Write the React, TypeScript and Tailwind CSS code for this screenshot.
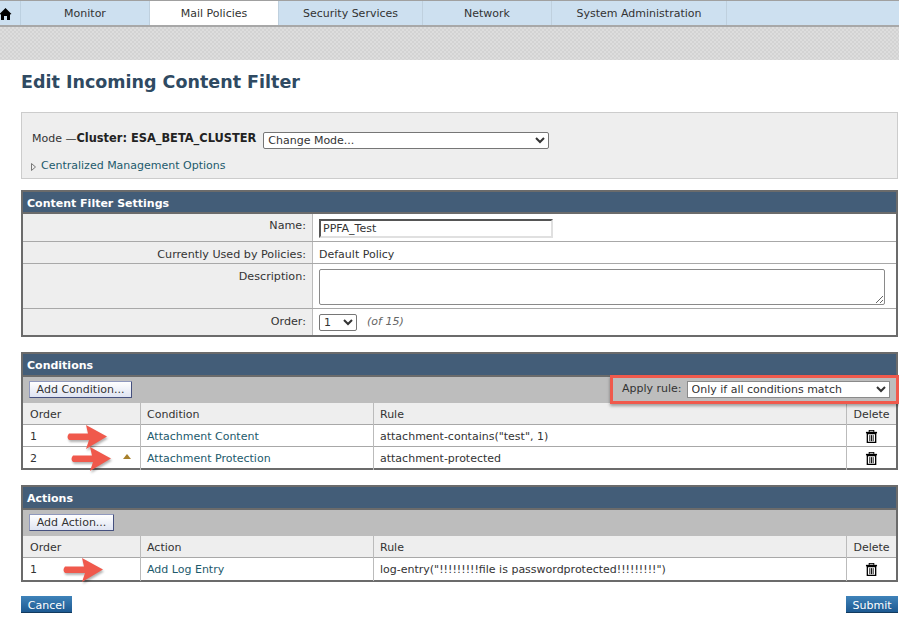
import * as React from "react";

const tabs = [
  { label: "Monitor", width: "w-[129px]" },
  { label: "Mail Policies", width: "w-[129px]", active: true },
  { label: "Security Services", width: "w-[144px]" },
  { label: "Network", width: "w-[129px]" },
  { label: "System Administration", width: "w-[175px]" },
];

function HomeIcon() {
  return (
    <svg viewBox="0 0 12 12" className="w-[12px] h-[12px] shrink-0 mt-[2px]">
      <path d="M5.5 0 L11.5 6 L10 6.5 L10 12 L7 12 L7 8 L4 8 L4 12 L1 12 L1 6.5 L-0.5 6 Z" fill="#000000" />
    </svg>
  );
}

function TrashIcon() {
  return (
    <svg viewBox="0 0 12 14" className="w-[12px] h-[13px] mx-auto -translate-x-[0.5px]">
      <rect x="0" y="2" width="12" height="1.6" fill="#000000" />
      <rect x="3.5" y="0.4" width="5" height="2" fill="none" stroke="#000000" strokeWidth="1" />
      <path d="M1.5 4 L10.5 4 L10.5 13.4 L1.5 13.4 Z" fill="none" stroke="#000000" strokeWidth="1.4" />
      <path d="M4.2 5.5 V12 M6 5.5 V12 M7.8 5.5 V12" stroke="#000000" strokeWidth="1" />
    </svg>
  );
}

function Arrow({ className }: { className: string }) {
  return (
    <svg
      viewBox="0 0 42 26"
      className={`absolute w-[42px] h-[26px] drop-shadow-[1px_2px_1px_rgba(0,0,0,0.3)] ${className}`}
    >
      <path d="M3 9.5 L22 9.5 L20 1 L41 12.5 L20 25 L23 16 L3 16 Q0 13 3 9.5 Z" fill="#f0594c" />
    </svg>
  );
}

function SectionHeader({ title, height }: { title: string; height: string }) {
  return (
    <div className={`${height} bg-[#435d78] border-b-2 border-[#6b6b6b] pl-1 pt-[4px] text-white font-bold text-[11px] leading-[15px]`}>
      {title}
    </div>
  );
}

function GridRow({
  cols,
  head,
  arrow,
  caret,
  last,
  height = "h-[22px]",
}: {
  cols: [string, string, string];
  head?: boolean;
  arrow?: string;
  caret?: boolean;
  last?: boolean;
  height?: string;
}) {
  return (
    <div
      className={`grid grid-cols-[118px_233px_473px_1fr] ${height} ${head ? "bg-[#eeeeee]" : "bg-white"} ${last ? "" : "border-b border-[#a8a8a8]"}`}
    >
      <div className="relative border-r border-[#bbbbbb] pl-[7px] leading-[23px]">
        {cols[0]}
        {arrow && <Arrow className={arrow} />}
        {caret && (
          <span className="absolute left-[100px] top-[7px] w-0 h-0 border-x-[4px] border-x-transparent border-b-[5px] border-b-[#a8812c]" />
        )}
      </div>
      <div className={`border-r border-[#bbbbbb] pl-[6px] leading-[23px] ${head ? "" : "text-[#1c5a6c]"}`}>{cols[1]}</div>
      <div className="border-r border-[#bbbbbb] pl-[6px] leading-[23px] whitespace-nowrap">{cols[2]}</div>
      <div className={head ? "text-center leading-[23px]" : "flex items-center justify-center"}>{head ? "Delete" : <TrashIcon />}</div>
    </div>
  );
}

function FormRow({
  label,
  height,
  children,
  last,
  labelTop = "pt-[5px]",
}: {
  label: string;
  height: string;
  children: React.ReactNode;
  last?: boolean;
  labelTop?: string;
}) {
  return (
    <div className={`flex ${height} ${last ? "" : "border-b border-[#a8a8a8]"}`}>
      <div className={`w-[290px] shrink-0 bg-[#eeeeee] border-r border-[#bbbbbb] text-right pr-[6px] ${labelTop} text-[11.15px] leading-[15px]`}>{label}:</div>
      <div className="flex-1 bg-white pl-[6px] pt-[5px]">{children}</div>
    </div>
  );
}

const addButton =
  "block h-[17px] pt-[1px] bg-gradient-to-b from-white to-[#dfe4f2] border border-[#8f98bd] border-r-[#45507e] border-b-[#45507e] rounded-[1px] text-[11px] leading-[14px] text-[#333333]";
const blueButton =
  "h-[17px] bg-gradient-to-b from-[#3f83ba] to-[#1d5a92] border-b border-[#123a5e] text-white text-[11px] leading-[19px]";

export default function App() {
  return (
    <div className="relative w-[899px] h-[623px] overflow-hidden bg-white text-[#333333] text-[11px] font-['DejaVu_Sans',Verdana,sans-serif]">
      <nav className="flex h-[27px] bg-[#cde0f0] border-t border-t-[#a0a0a0] border-b-2 border-b-[#a8a8a8]">
        <div className="w-[21px] border-r border-[#bcd0e0] overflow-hidden flex items-center">
          <HomeIcon />
        </div>
        {tabs.map((tab) => (
          <div
            key={tab.label}
            className={`${tab.width} text-center leading-[25px] border-r border-[#bfd0de] ${tab.active ? "bg-white" : ""}`}
          >
            {tab.label}
          </div>
        ))}
      </nav>
      <div className="h-[33px] bg-[conic-gradient(#d3d3d3_25%,#dddddd_0_50%,#d3d3d3_0_75%,#dddddd_0)] bg-[length:4px_4px]" />

      <main className="pl-[21px] pr-[1px]">
        <h1 className="mt-[9px] h-[30px] text-[#2f4a62] font-bold text-[17.5px] leading-[26px]">Edit Incoming Content Filter</h1>

        <section className="mt-[13px] h-[67px] bg-[#eeeeee] border border-[#cccccc] pl-[10px] pt-[18px]">
          <div className="flex items-start h-[18px] leading-[15px]">
            <span>Mode —</span>
            <span className="font-bold text-[#222222] text-[11.4px]">Cluster: ESA_BETA_CLUSTER</span>
            <select className="ml-[7px] mt-[1px] w-[286px] h-[17px] bg-white border border-[#767676] rounded-[2px] text-[11px] text-[#333333]">
              <option>Change Mode...</option>
            </select>
          </div>
          <div className="mt-[10px] flex items-center h-[15px] text-[#1c5a6c]">
            <svg viewBox="0 0 5 8" className="w-[5px] h-[8px] mr-[5px] -ml-[1px]">
              <path d="M0.5 0.5 L4.5 4 L0.5 7.5 Z" fill="none" stroke="#777777" strokeWidth="1" />
            </svg>
            Centralized Management Options
          </div>
        </section>

        <section className="mt-[11px] border-2 border-[#6b6b6b]">
          <SectionHeader title="Content Filter Settings" height="h-[22px]" />
          <FormRow label="Name" height="h-[28px]" labelTop="pt-[4px]">
            <input
              readOnly
              value="PPFA_Test"
              className="block w-[234px] h-[19px] bg-white border-2 border-t-[#555555] border-l-[#555555] border-r-[#e0e0e0] border-b-[#e0e0e0] pl-[2px] text-[11px] text-[#333333] outline-none"
            />
          </FormRow>
          <FormRow label="Currently Used by Policies" height="h-[22px]">
            <span className="leading-[15px] block">Default Policy</span>
          </FormRow>
          <FormRow label="Description" height="h-[45px]">
            <textarea readOnly className="block w-[566px] h-[36px] bg-white border border-[#8a8a8a] rounded-[2px]" />
          </FormRow>
          <FormRow label="Order" height="h-[26px]" last>
            <div className="flex items-center gap-[10px]">
              <select className="w-[38px] h-[17px] bg-white border border-[#767676] rounded-[2px] text-[11px] text-[#333333]">
                <option>1</option>
              </select>
              <span className="italic text-[#666666]">(of 15)</span>
            </div>
          </FormRow>
        </section>

        <section className="mt-[15px] border-2 border-[#6b6b6b]">
          <SectionHeader title="Conditions" height="h-[23px]" />
          <div className="relative h-[26px] bg-[#bdbdbd] pl-[6px] pt-[4px]">
            <button className={`${addButton} w-[103px]`}>Add Condition...</button>
            <div className="absolute right-[-3px] top-[-2px] w-[289px] h-[29px] border-[3px] border-[#f0594c] shadow-[0_2px_3px_rgba(0,0,0,0.35)] flex items-center pl-[9px] gap-[5px]">
              <span>Apply rule:</span>
              <select className="w-[203px] h-[17px] bg-white border border-[#8a8a8a] text-[11px] text-[#333333]">
                <option>Only if all conditions match</option>
              </select>
            </div>
          </div>
          <GridRow head cols={["Order", "Condition", "Rule"]} />
          <GridRow cols={["1", "Attachment Content", 'attachment-contains("test", 1)']} arrow="left-[43px] top-[-1px]" />
          <GridRow cols={["2", "Attachment Protection", "attachment-protected"]} arrow="left-[47px] top-[-1px]" caret last height="h-[21px]" />
        </section>

        <section className="mt-[15px] border-2 border-[#6b6b6b]">
          <SectionHeader title="Actions" height="h-[23px]" />
          <div className="h-[26px] bg-[#bdbdbd] pl-[6px] pt-[4px]">
            <button className={`${addButton} w-[85px]`}>Add Action...</button>
          </div>
          <GridRow head cols={["Order", "Action", "Rule"]} />
          <GridRow cols={["1", "Add Log Entry", 'log-entry("!!!!!!!!!file is passwordprotected!!!!!!!!!")']} arrow="left-[39px] top-[-1px]" last />
        </section>

        <div className="mt-[14px] flex justify-between">
          <button className={`${blueButton} w-[51px]`}>Cancel</button>
          <button className={`${blueButton} w-[52px]`}>Submit</button>
        </div>
      </main>
    </div>
  );
}
